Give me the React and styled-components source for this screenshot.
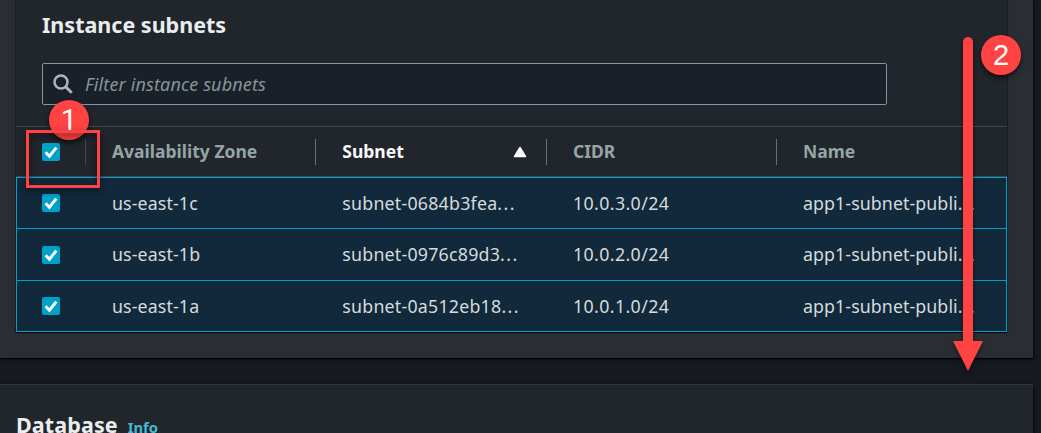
import React from "react";
import styled, { createGlobalStyle } from "styled-components";

const Global = createGlobalStyle`
  *, *::before, *::after { box-sizing: border-box; }
  html, body { margin: 0; height: 100%; overflow: hidden; background: #16191f; }
  body { font-family: "Noto Sans", "Open Sans", sans-serif; }
`;

const Page = styled.div`
  position: relative;
  width: 1041px;
  height: 433px;
  overflow: hidden;
  display: flex;
  flex-direction: column;
  gap: 26px;
  background: #16191f;
`;

const Panel = styled.section`
  width: 1033px;
  height: 358px;
  flex: none;
  padding: 0 26px 26px 16px;
  background: #2a2e33;
  box-shadow: 0 1px 1px rgba(0, 0, 0, 0.7), 1px 1px 3px rgba(0, 0, 0, 0.6);
`;

const Card = styled.div`
  height: 332px;
  background: #21252c;
  box-shadow: 0 1px 1px rgba(0, 0, 0, 0.6), 0 0 1px 1px rgba(0, 0, 0, 0.25);
`;

const CardHeader = styled.div`
  height: 126px;
  padding: 8px 26px 0;
`;

const Heading = styled.h2`
  margin: 0;
  font-size: 21.5px;
  line-height: 34px;
  font-weight: 700;
  letter-spacing: ${(p) => p.$track || "0"};
  color: #eaeded;
  white-space: nowrap;
`;

const Search = styled.label`
  display: flex;
  align-items: center;
  gap: 12px;
  width: 845px;
  height: 42px;
  margin-top: 21px;
  padding-left: 10px;
  border: 1px solid #879596;
  border-radius: 2px;
  background: #1a2029;
`;

const Placeholder = styled.span`
  font-size: 18px;
  font-style: italic;
  letter-spacing: 0.14px;
  color: #879596;
  white-space: nowrap;
`;

const Grid = styled.div`
  display: grid;
  grid-template-columns: 70px 230.3px 230.7px 230px 230px;
`;

const HeaderRow = styled(Grid)`
  height: 51px;
  align-items: center;
  border-top: 1px solid #414750;
  border-bottom: 1px solid #414750;
`;

const HeadCell = styled.div`
  display: flex;
  align-items: center;
  justify-content: space-between;
  height: 26px;
  padding: 0 19px 0 26px;
  border-right: 1px solid ${(p) => (p.$last ? "transparent" : p.$dim ? "#414750" : "#687078")};
  font-size: 17.5px;
  font-weight: 700;
  line-height: 24px;
  color: ${(p) => (p.$active ? "#fafafa" : "#95a5a6")};
  white-space: nowrap;
`;

const HeadLabel = styled.span`
  padding-bottom: 2px;
`;

const Row = styled(Grid)`
  height: ${(p) => p.$height}px;
  border: 1px solid #00a1c9;
  border-bottom-width: ${(p) => (p.$last ? 1 : 0)}px;
  background: #12293b;
`;

const Cell = styled.div`
  height: 50px;
  padding-left: 25px;
  font-size: 17.8px;
  line-height: 50px;
  letter-spacing: ${(p) => p.$track || "0.12px"};
  color: #d5dbdb;
  white-space: nowrap;
`;

const Dots = styled.span`
  letter-spacing: 1.4px;
`;

const CheckCell = styled.div`
  padding: ${(p) => p.$top}px 0 0 25px;
`;

const Box = styled.span`
  display: flex;
  align-items: center;
  justify-content: center;
  width: 18px;
  height: 18px;
  border-radius: 2px;
  background: #00a1c9;
`;

const NextPanel = styled.section`
  display: flex;
  align-items: baseline;
  gap: 10px;
  width: 1033px;
  height: 100px;
  flex: none;
  padding: 23px 16px 0;
  border-top: 1px solid #30353b;
  background: #21252c;
  box-shadow: 1px 1px 3px rgba(0, 0, 0, 0.6);
`;

const InfoLink = styled.a`
  font-size: 14.8px;
  font-weight: 700;
  color: #44b9d6;
`;

const Badge = styled.div`
  position: absolute;
  left: ${(p) => p.$x}px;
  top: ${(p) => p.$y}px;
  display: flex;
  align-items: center;
  justify-content: center;
  width: 40px;
  height: 40px;
  border-radius: 50%;
  background: #ff4343;
  box-shadow: 0 3px 5px rgba(0, 0, 0, 0.6);
  color: #fff;
  font-family: ${(p) => p.$font || "Roboto"}, sans-serif;
  font-size: 29px;
  line-height: 40px;
`;

const Highlight = styled.div`
  position: absolute;
  left: 26px;
  top: 130px;
  width: 74px;
  height: 58px;
  border: 3px solid #ff4343;
  filter: drop-shadow(0 3px 3px rgba(0, 0, 0, 0.65));
`;

const Arrow = styled.svg`
  position: absolute;
  left: 945px;
  top: 30px;
  filter: drop-shadow(0 2px 2px rgba(0, 0, 0, 0.5));
`;

function Checkbox() {
  return (
    <Box role="checkbox" aria-checked="true">
      <svg width="18" height="18" viewBox="0 0 18 18" fill="none">
        <path d="M3.6 9.2 7.4 13.2 14.3 4.6" stroke="#fff" strokeWidth="2.9" />
      </svg>
    </Box>
  );
}

const rows = [
  { zone: "us-east-1c", subnet: "subnet-0684b3fea", cidr: "10.0.3.0/24", height: 51, top: 16 },
  { zone: "us-east-1b", subnet: "subnet-0976c89d3", cidr: "10.0.2.0/24", height: 52, top: 17 },
  { zone: "us-east-1a", subnet: "subnet-0a512eb18", cidr: "10.0.1.0/24", height: 52, top: 16 },
];

export default function App() {
  return (
    <>
      <Global />
      <Page>
        <Panel>
          <Card>
            <CardHeader>
              <Heading>Instance subnets</Heading>
              <Search>
                <svg width="20" height="20" viewBox="0 0 20 20" fill="none" stroke="#aab7b8" strokeWidth="2.5">
                  <circle cx="8" cy="8" r="6.5" />
                  <path d="m12.7 12.7 6 6" strokeWidth="3" />
                </svg>
                <Placeholder>Filter instance subnets</Placeholder>
              </Search>
            </CardHeader>
            <HeaderRow>
              <HeadCell $dim><Checkbox /></HeadCell>
              <HeadCell><HeadLabel>Availability Zone</HeadLabel></HeadCell>
              <HeadCell $active>
                <HeadLabel>Subnet</HeadLabel>
                <svg width="14" height="12" viewBox="0 0 14 12">
                  <path d="M7 1.5 12.5 10.5h-11Z" fill="#fafafa" stroke="#fafafa" strokeWidth="1.5" strokeLinejoin="round" />
                </svg>
              </HeadCell>
              <HeadCell><HeadLabel>CIDR</HeadLabel></HeadCell>
              <HeadCell $last><HeadLabel>Name</HeadLabel></HeadCell>
            </HeaderRow>
            {rows.map((r, i) => (
              <Row key={r.zone} $height={r.height} $last={i === rows.length - 1}>
                <CheckCell $top={r.top}><Checkbox /></CheckCell>
                <Cell>{r.zone}</Cell>
                <Cell $track="0.22px">{r.subnet}<Dots>...</Dots></Cell>
                <Cell $track="0.38px">{r.cidr}</Cell>
                <Cell $track="0.08px">app1-subnet-publi<Dots>...</Dots></Cell>
              </Row>
            ))}
          </Card>
        </Panel>
        <NextPanel>
          <Heading $track="0.1px">Database</Heading>
          <InfoLink>Info</InfoLink>
        </NextPanel>
        <Badge $x={49} $y={100}>1</Badge>
        <Highlight />
        <Arrow width="46" height="350" viewBox="0 0 46 350">
          <path d="M23 12v300" stroke="#ff4343" strokeWidth="10" strokeLinecap="round" />
          <path d="M8 311h30L23 341Z" fill="#ff4343" />
        </Arrow>
        <Badge $x={981} $y={35} $font={'"Liberation Sans"'}>2</Badge>
      </Page>
    </>
  );
}
